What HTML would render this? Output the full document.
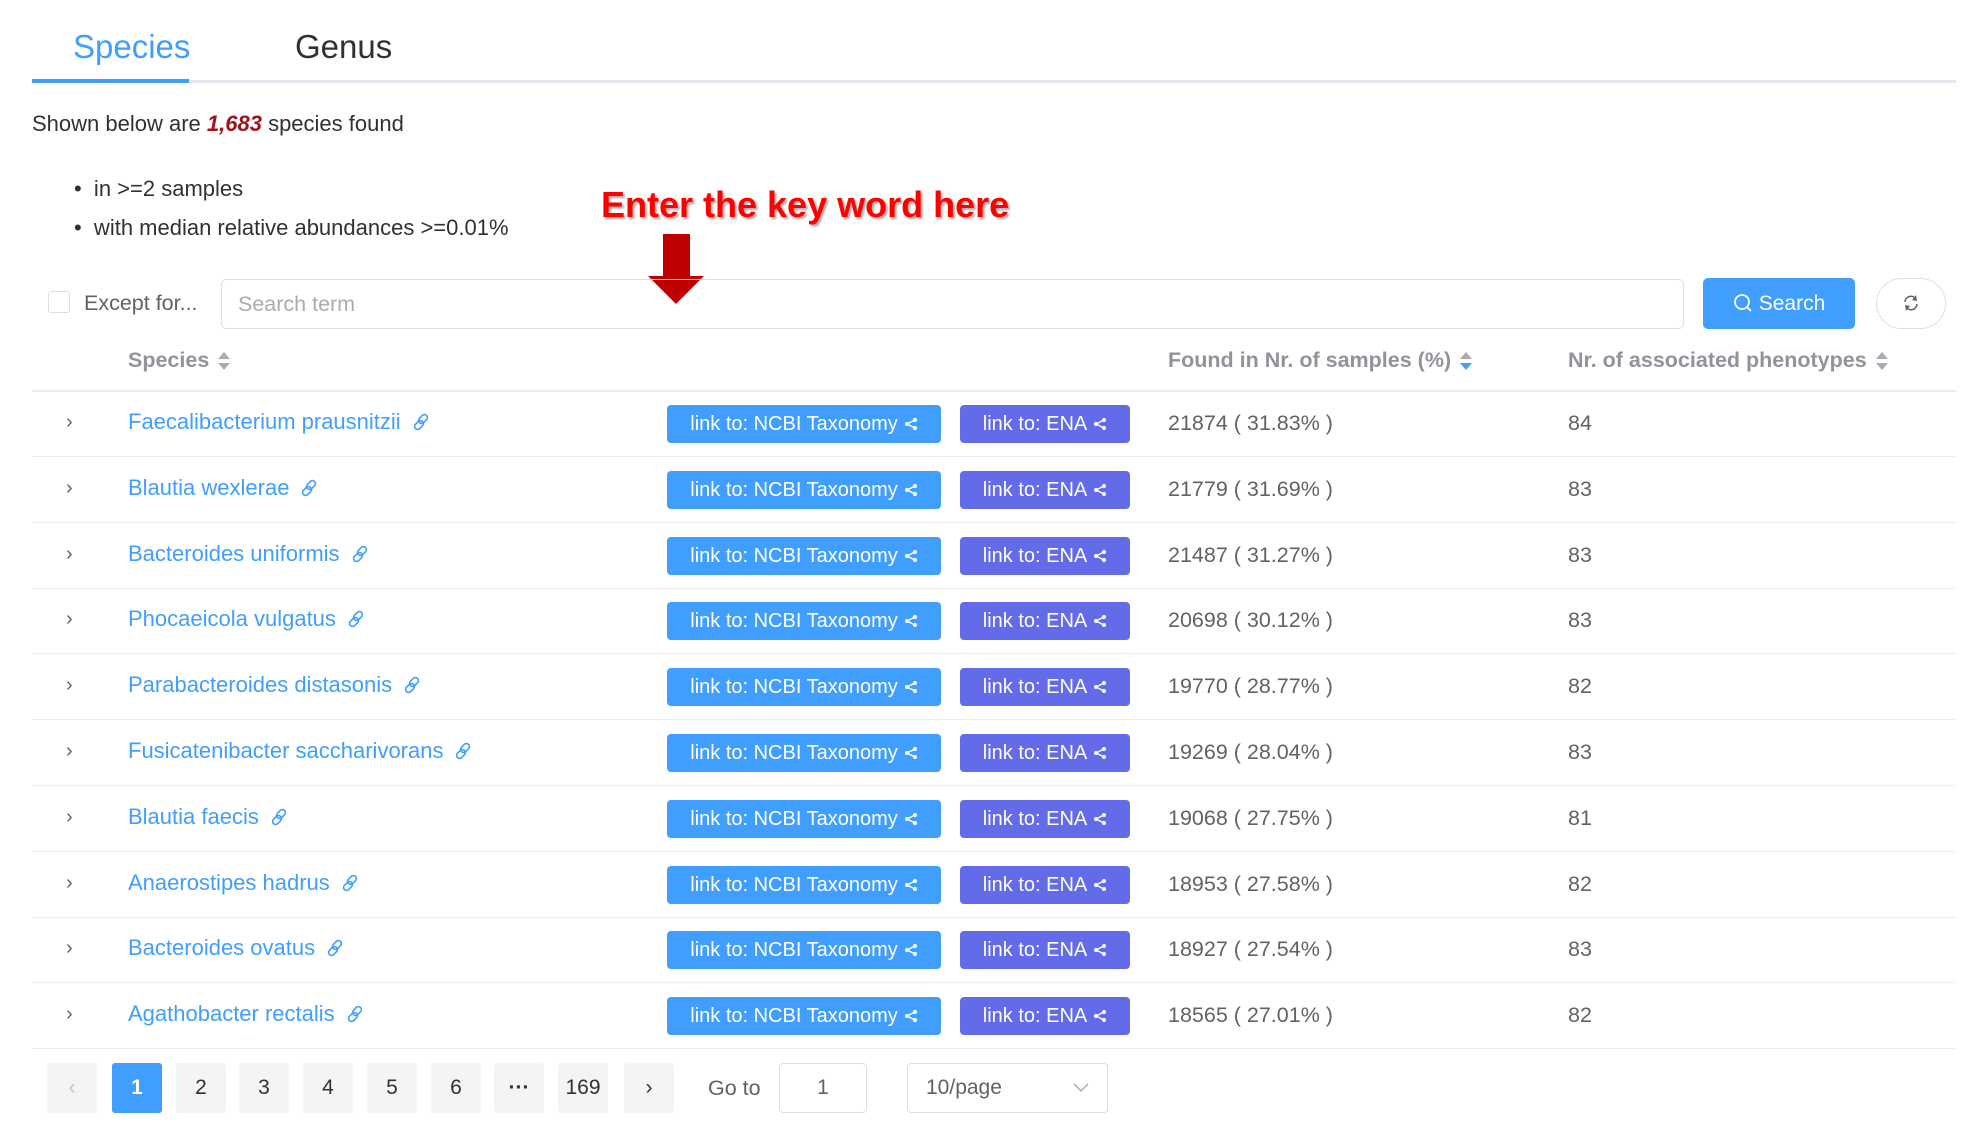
<!DOCTYPE html>
<html><head><meta charset="utf-8"><style>
*{margin:0;padding:0;box-sizing:border-box}
body{width:1975px;height:1125px;background:#fff;font-family:"Liberation Sans","Noto Sans CJK SC",sans-serif;color:#606266;position:relative;overflow:hidden}
.a{position:absolute;white-space:nowrap}
.tab{font-size:33px;top:28px}
.btn{position:absolute;height:38px;border-radius:4px;color:#fff;font-size:20px;line-height:38px;text-align:center}
.ncbi{left:667px;width:274px;background:#409eff}
.ena{left:960px;width:170px;background:#636be9}
.row{position:absolute;left:32px;width:1924px;height:66px;border-bottom:1.5px solid #ebeef5}
.name{color:#409eff;font-size:22px}
.txt{font-size:21.5px;color:#606266}
.pg{position:absolute;top:1063px;width:50px;height:50px;background:#f4f4f5;border-radius:3px;font-size:21px;line-height:50px;text-align:center;color:#303133}
.sort{display:inline-block;vertical-align:middle;margin-left:8px}
</style></head><body>
<div class="a tab" style="left:73px;color:#409eff">Species</div>
<div class="a tab" style="left:295px;color:#303133">Genus</div>
<div class="a" style="left:32px;top:80px;width:1924px;height:3px;background:#e4e7ed"></div>
<div class="a" style="left:32px;top:79px;width:157px;height:4px;background:#409eff"></div>

<div class="a txt" style="left:32px;top:111px;color:#303133;font-size:22px">Shown below are <b style="color:#a0141c;font-style:italic">1,683</b> species found</div>
<div class="a txt" style="left:74px;top:176px;color:#303133;font-size:22px">•&nbsp;&nbsp;in &gt;=2 samples</div>
<div class="a txt" style="left:74px;top:215px;color:#303133;font-size:22px">•&nbsp;&nbsp;with median relative abundances &gt;=0.01%</div>

<div class="a" style="left:601px;top:184px;font-size:36px;font-weight:bold;color:#f00;text-shadow:2px 2px 2px rgba(0,0,0,.35)">Enter the key word here</div>
<svg class="a" style="left:645px;top:234px" width="62" height="72"><rect x="18" y="0" width="27" height="42" fill="#c00000"/><polygon points="3,42 59,42 31,70" fill="#c00000"/></svg>

<div class="a" style="left:48px;top:291px;width:22px;height:22px;border:1.5px solid #dcdfe6;border-radius:3px"></div>
<div class="a txt" style="left:84px;top:291px;color:#606266">Except for...</div>
<div class="a" style="left:221px;top:279px;width:1463px;height:50px;border:1.5px solid #dcdfe6;border-radius:5px"></div>
<div class="a txt" style="left:238px;top:292px;color:#a8abb2">Search term</div>
<div class="a" style="left:1703px;top:278px;width:152px;height:51px;background:#409eff;border-radius:5px;color:#fff;font-size:21px;line-height:51px;text-align:center"><svg width="20" height="20" style="vertical-align:-3px;margin-right:6px"><circle cx="9" cy="9" r="7" fill="none" stroke="#fff" stroke-width="1.8"/><line x1="14" y1="14" x2="18" y2="18" stroke="#fff" stroke-width="1.8"/></svg>Search</div>
<div class="a" style="left:1876px;top:278px;width:70px;height:51px;border:1.5px solid #dcdfe6;border-radius:26px"></div>
<svg class="a" style="left:1901px;top:293px" width="20" height="20"><path d="M4 9 A6 6 0 0 1 15 6" fill="none" stroke="#606266" stroke-width="1.6"/><path d="M16 11 A6 6 0 0 1 5 14" fill="none" stroke="#606266" stroke-width="1.6"/><polygon points="15,2 16,8 11,7" fill="#606266"/><polygon points="5,18 4,12 9,13" fill="#606266"/></svg>

<div class="a" style="left:32px;top:390px;width:1924px;height:1.5px;background:#ebeef5"></div>
<div class="a" style="left:128px;top:348px;font-size:21.5px;font-weight:bold;color:#909399">Species<svg class="sort" width="14" height="22"><polygon points="7,2 13,9 1,9" fill="#a8abb2"/><polygon points="7,20 13,13 1,13" fill="#a8abb2"/></svg></div>
<div class="a" style="left:1168px;top:348px;font-size:21.5px;font-weight:bold;color:#909399">Found in Nr. of samples (%)<svg class="sort" width="14" height="22"><polygon points="7,2 13,9 1,9" fill="#a8abb2"/><polygon points="7,20 13,13 1,13" fill="#409eff"/></svg></div>
<div class="a" style="left:1568px;top:348px;font-size:21.5px;font-weight:bold;color:#909399">Nr. of associated phenotypes<svg class="sort" width="14" height="22"><polygon points="7,2 13,9 1,9" fill="#a8abb2"/><polygon points="7,20 13,13 1,13" fill="#a8abb2"/></svg></div>

<div id="rows"></div>
<script>
var d=[["Faecalibacterium prausnitzii","21874 ( 31.83% )","84"],["Blautia wexlerae","21779 ( 31.69% )","83"],["Bacteroides uniformis","21487 ( 31.27% )","83"],["Phocaeicola vulgatus","20698 ( 30.12% )","83"],["Parabacteroides distasonis","19770 ( 28.77% )","82"],["Fusicatenibacter saccharivorans","19269 ( 28.04% )","83"],["Blautia faecis","19068 ( 27.75% )","81"],["Anaerostipes hadrus","18953 ( 27.58% )","82"],["Bacteroides ovatus","18927 ( 27.54% )","83"],["Agathobacter rectalis","18565 ( 27.01% )","82"]];
var sh='<svg width="14" height="14" style="vertical-align:-1px;margin-left:6px"><circle cx="11" cy="3" r="2" fill="#fff"/><circle cx="3" cy="7" r="2" fill="#fff"/><circle cx="11" cy="11" r="2" fill="#fff"/><path d="M11 3L3 7L11 11" stroke="#fff" stroke-width="1.4" fill="none"/></svg>';
var lk='<svg width="18" height="18" style="vertical-align:-2px;margin-left:12px"><g fill="none" stroke="#409eff" stroke-width="1.6"><rect x="7" y="1" width="6" height="10" rx="3" transform="rotate(45 10 6)"/><rect x="3" y="7" width="6" height="10" rx="3" transform="rotate(45 6 12)"/></g></svg>';
var h='';
for(var i=0;i<d.length;i++){var t=Math.round(391+i*65.8),c=t+33;
h+='<div class="row" style="top:'+t+'px"></div>';
h+='<div class="a" style="left:66px;top:'+(c-13)+'px;font-size:20px;color:#606266">&#x203A;</div>';
h+='<div class="a name" style="left:128px;top:'+(c-15)+'px">'+d[i][0]+lk+'</div>';
h+='<div class="btn ncbi" style="top:'+(c-19)+'px">link to: NCBI Taxonomy'+sh+'</div>';
h+='<div class="btn ena" style="top:'+(c-19)+'px">link to: ENA'+sh+'</div>';
h+='<div class="a txt" style="left:1168px;top:'+(c-13)+'px">'+d[i][1]+'</div>';
h+='<div class="a txt" style="left:1568px;top:'+(c-13)+'px">'+d[i][2]+'</div>';}
document.getElementById('rows').innerHTML=h;
</script>

<div class="pg" style="left:47px;color:#c0c4cc">&#x2039;</div>
<div class="pg" style="left:112px;background:#409eff;color:#fff;font-weight:bold">1</div>
<div class="pg" style="left:176px">2</div>
<div class="pg" style="left:239px">3</div>
<div class="pg" style="left:303px">4</div>
<div class="pg" style="left:367px">5</div>
<div class="pg" style="left:431px">6</div>
<div class="pg" style="left:494px;font-weight:bold">···</div>
<div class="pg" style="left:558px">169</div>
<div class="pg" style="left:624px">&#x203A;</div>
<div class="a txt" style="left:708px;top:1076px">Go to</div>
<div class="a" style="left:779px;top:1063px;width:88px;height:50px;border:1.5px solid #dcdfe6;border-radius:4px;font-size:21px;line-height:47px;text-align:center;color:#606266">1</div>
<div class="a" style="left:907px;top:1063px;width:201px;height:50px;border:1.5px solid #dcdfe6;border-radius:4px;font-size:21px;line-height:47px;padding-left:18px;color:#606266">10/page</div>
<svg class="a" style="left:1073px;top:1083px" width="16" height="10"><path d="M1 1L8 8L15 1" fill="none" stroke="#a8abb2" stroke-width="1.5"/></svg>
</body></html>
